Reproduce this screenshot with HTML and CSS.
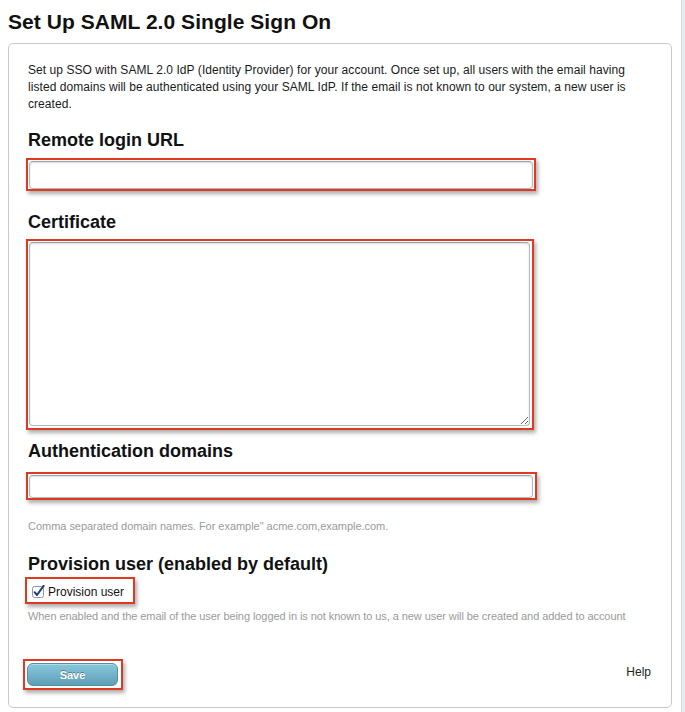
FILE: index.html
```html
<!DOCTYPE html>
<html lang="en">
<head>
<meta charset="utf-8">
<title>Set Up SAML 2.0 Single Sign On</title>
<link rel="stylesheet" href="styles.css">
</head>
<body>
<div class="page">
  <main class="main">
    <h1 class="title">Set Up SAML 2.0 Single Sign On</h1>
    <section class="panel">
      <p class="intro">Set up SSO with SAML 2.0 IdP (Identity Provider) for your account. Once set up, all users with the email having listed domains will be authenticated using your SAML IdP. If the email is not known to our system, a new user is created.</p>

      <h2 class="label label-url">Remote login URL</h2>
      <div class="hl hl-url"><input class="field" type="text"></div>

      <h2 class="label label-cert">Certificate</h2>
      <div class="hl hl-cert"><textarea class="field area"></textarea></div>

      <h2 class="label label-domains">Authentication domains</h2>
      <div class="hl hl-domains"><input class="field" type="text"></div>
      <p class="hint hint-domains">Comma separated domain names. For example" acme.com,example.com.</p>

      <h2 class="label label-prov">Provision user (enabled by default)</h2>
      <label class="hl check">
        <svg class="box" width="13" height="13" viewBox="0 0 13 13" aria-hidden="true">
          <rect x="0.5" y="1.5" width="11" height="11" rx="2" fill="#fff" stroke="#8e96a3"/>
          <path d="M2.6 7.2 L5 10 L11.6 0.8" fill="none" stroke="#1d3f7a" stroke-width="2" stroke-linecap="round" stroke-linejoin="round"/>
        </svg>
        <span>Provision user</span>
      </label>
      <p class="hint hint-prov">When enabled and the email of the user being logged in is not known to us, a new user will be created and added to account</p>

      <div class="actions">
        <div class="hl hl-save"><button class="save" type="button">Save</button></div>
        <span class="help">Help</span>
      </div>
    </section>
  </main>
  <div class="edge"></div>
</div>
</body>
</html>
```
FILE: styles.css
```css
html, body {
  margin: 0;
  padding: 0;
  background: #fff;
}

body {
  font-family: "Liberation Sans", Arial, Helvetica, sans-serif;
  color: #111;
}

.page {
  display: flex;
  min-height: 712px;
}

.main {
  flex: 1;
  padding: 10px 0 0 8px;
}

.edge {
  width: 3px;
  border-left: 1px solid #d3d9e0;
  background: #e8edf2;
}

.title {
  margin: 0 0 9px;
  font-size: 21px;
  line-height: 24px;
  font-weight: bold;
  color: #111;
  letter-spacing: 0.05px;
}

.panel {
  box-sizing: border-box;
  width: 664px;
  border: 1px solid #cacaca;
  border-radius: 5px;
  padding: 18px 20px 17px 19px;
}

.intro {
  margin: 0;
  max-width: 606px;
  font-size: 12px;
  line-height: 17px;
  color: #1a1a1a;
  letter-spacing: 0.06px;
}

.label {
  margin: 0;
  font-size: 18px;
  line-height: 22px;
  font-weight: bold;
  color: #111;
}

.label-url { margin-top: 16px; }
.label-cert { margin-top: 20px; }
.label-domains { margin-top: 10px; }
.label-prov { margin-top: 20px; }

.hl {
  box-sizing: border-box;
  border: 2px solid #dd3a20;
  box-shadow: 2px 3px 4px rgba(0, 0, 0, 0.32);
  background: #fff;
}

.hl-url {
  width: 510px;
  height: 33px;
  margin: 7px 0 0 -2px;
  padding: 1px 1px 0 1px;
}

.hl-cert {
  width: 508px;
  height: 191px;
  margin: 6px 0 0 -2px;
  padding: 1px 2px 2px 1px;
}

.hl-domains {
  width: 511px;
  height: 28px;
  margin: 10px 0 0 -2px;
  padding: 1px 2px 0 1px;
}

.field {
  display: block;
  box-sizing: border-box;
  width: 100%;
  height: 100%;
  margin: 0;
  border: 1px solid #b3b8c0;
  border-top-color: #9da3ac;
  border-radius: 4px;
  background: #fff;
  box-shadow: inset 0 1px 2px rgba(0, 0, 0, 0.15);
  font-family: inherit;
  font-size: 12px;
  outline: none;
}

.area {
  resize: both;
}

.hint {
  margin: 0;
  font-size: 11px;
  line-height: 14px;
  color: #9a9a9a;
}

.hint-domains { margin-top: 19px; letter-spacing: -0.03px; }
.hint-prov { margin-top: 5px; letter-spacing: -0.07px; }

.check {
  display: flex;
  align-items: center;
  gap: 3px;
  width: 110px;
  height: 27px;
  margin: 2px 0 0 -3px;
  padding: 2px 0 0 5px;
  font-size: 12px;
  color: #111;
}

.box {
  display: block;
  flex: none;
}

.actions {
  display: flex;
  justify-content: space-between;
  align-items: center;
  margin-top: 36px;
}

.hl-save {
  width: 100px;
  height: 31px;
  margin-left: -5px;
  padding: 2px 3px 2px 2px;
}

.save {
  display: block;
  width: 100%;
  height: 100%;
  margin: 0;
  border: 1px solid #4f8ea6;
  border-radius: 6px;
  background: linear-gradient(#8ac8dc, #5c9fb7);
  color: #fff;
  font-family: inherit;
  font-size: 11px;
  font-weight: bold;
  text-shadow: 0 -1px 0 rgba(0, 0, 0, 0.35);
  box-shadow: inset 0 1px 0 rgba(255, 255, 255, 0.35);
}

.help {
  padding-bottom: 5px;
  font-size: 12px;
  color: #222;
}
```
